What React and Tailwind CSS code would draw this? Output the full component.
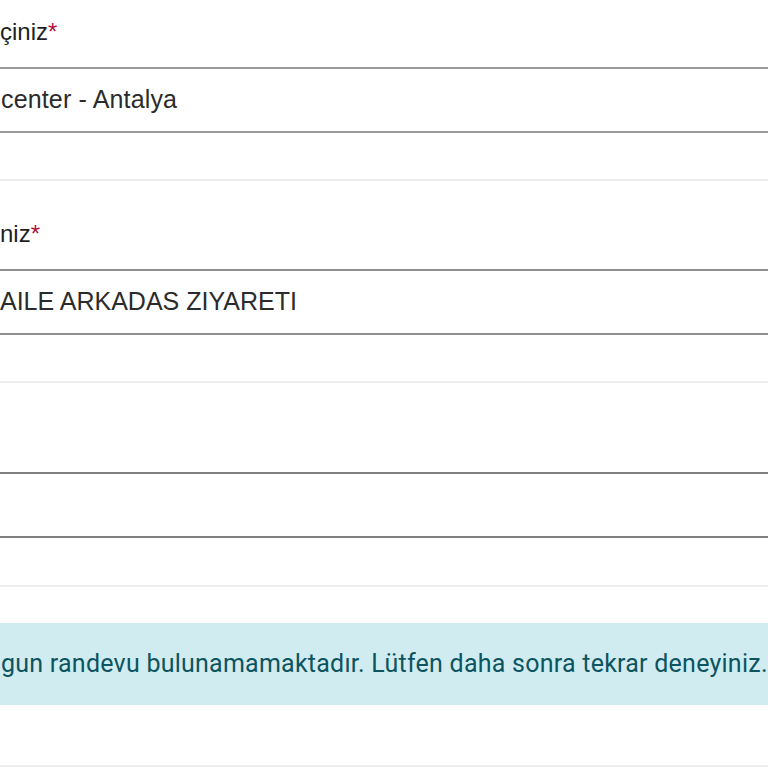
export default function App() {
  const sans = { fontFamily: '"Liberation Sans", Arial, sans-serif' };
  return (
    <div className="w-[768px] h-[768px] overflow-hidden bg-white flex flex-col" style={sans}>
      {/* Group 1 */}
      <div className="h-[67px] flex items-end pb-[21px] text-[24px] leading-[28px] text-[#1f1f1f] whitespace-nowrap">
        <span>çiniz</span><span className="text-[#b0103a]">*</span>
      </div>
      <div className="h-[66px] border-y-2 border-[#9a9a9a] flex items-center pl-[1px] text-[25px] tracking-[0.15px] text-[#2b2b2b] whitespace-nowrap">
        center - Antalya
      </div>
      <div className="h-[46px]" />
      <div className="h-[2px] bg-[#ececec]" />

      {/* Group 2 */}
      <div className="h-[88px] flex items-end pb-[21px] text-[24px] leading-[28px] text-[#1f1f1f] whitespace-nowrap">
        <span>niz</span><span className="text-[#b0103a]">*</span>
      </div>
      <div className="h-[66px] border-y-2 border-[#8f8f8f] flex items-center text-[25px] text-[#2b2b2b] whitespace-nowrap">
        AILE ARKADAS ZIYARETI
      </div>
      <div className="h-[46px]" />
      <div className="h-[2px] bg-[#ececec]" />

      {/* Group 3 */}
      <div className="h-[89px]" />
      <div className="h-[66px] border-y-2 border-[#808080]" />
      <div className="h-[47px]" />
      <div className="h-[2px] bg-[#ececec]" />

      {/* Group 4 */}
      <div className="h-[36px]" />
      <div
        className="h-[82px] bg-[#d1ecf1] text-[#0c5460] flex items-center pl-[1px] whitespace-nowrap text-[25px] tracking-[0.24px]"
        style={{ fontFamily: 'Roboto, "Noto Sans", sans-serif' }}
      >
        <span>gun randevu bulunamamaktadır. Lütfen daha sonra tekrar deneyiniz.</span>
      </div>
      <div className="h-[60px]" />
      <div className="h-[2px] bg-[#ececec]" />
    </div>
  );
}
